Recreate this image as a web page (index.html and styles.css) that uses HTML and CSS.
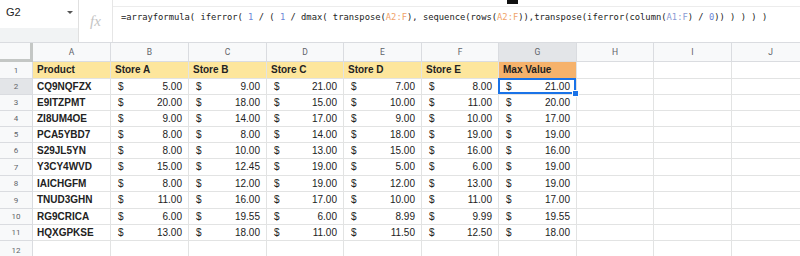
FILE: index.html
```html
<!DOCTYPE html>
<html lang="en">
<head>
    <meta charset="UTF-8">
    <title>Max Value - Sheet</title>
    <link rel="stylesheet" href="styles.css">
</head>
<body>
    <div class="fbar">
        <div class="namebox">
            <div class="nb-top"><span>G2</span><span class="caret"></span></div>
            <div class="nb-fill"></div>
        </div>
        <div class="fx">fx</div>
        <div class="formula">=arrayformula( iferror( <span class="num">1</span> / ( <span class="num">1</span> / dmax( transpose(<span class="r1">A2:F</span>), sequence(rows(<span class="r1">A2:F</span>)),transpose(iferror(column(<span class="r2">A1:F</span>) / <span class="num">0</span>)) ) ) ) )</div>
        <div class="cursor"></div>
    </div>

    <div class="sheet" id="sheet"></div>

    <script>
        var cols = ['A', 'B', 'C', 'D', 'E', 'F', 'G', 'H', 'I', 'J'];
        var heads = ['Product', 'Store A', 'Store B', 'Store C', 'Store D', 'Store E', 'Max Value'];
        var rows = [
            ['CQ9NQFZX', '5.00', '9.00', '21.00', '7.00', '8.00', '21.00'],
            ['E9ITZPMT', '20.00', '18.00', '15.00', '10.00', '11.00', '20.00'],
            ['ZI8UM4OE', '9.00', '14.00', '17.00', '9.00', '10.00', '17.00'],
            ['PCA5YBD7', '8.00', '8.00', '14.00', '18.00', '19.00', '19.00'],
            ['S29JL5YN', '8.00', '10.00', '13.00', '15.00', '16.00', '16.00'],
            ['Y3CY4WVD', '15.00', '12.45', '19.00', '5.00', '6.00', '19.00'],
            ['IAICHGFM', '8.00', '12.00', '19.00', '12.00', '13.00', '19.00'],
            ['TNUD3GHN', '11.00', '16.00', '17.00', '10.00', '11.00', '17.00'],
            ['RG9CRICA', '6.00', '19.55', '6.00', '8.99', '9.99', '19.55'],
            ['HQXGPKSE', '13.00', '18.00', '11.00', '11.50', '12.50', '18.00']
        ];

        var html = '<div class="corner"></div>';
        cols.forEach(function(c) {
            html += '<div class="colhead' + (c === 'G' ? ' active' : '') + '">' + c + '</div>';
        });

        // header row
        html += '<div class="rowhead">1</div>';
        cols.forEach(function(c, i) {
            if (i < 6) html += '<div class="cell head">' + heads[i] + '</div>';
            else if (i === 6) html += '<div class="cell head max">' + heads[i] + '</div>';
            else html += '<div class="cell"></div>';
        });

        rows.forEach(function(r, n) {
            html += '<div class="rowhead' + (n === 0 ? ' active' : '') + '">' + (n + 2) + '</div>';
            cols.forEach(function(c, i) {
                if (i === 0) html += '<div class="cell name">' + r[0] + '</div>';
                else if (i < 7) {
                    var sel = (n === 0 && i === 6) ? ' sel' : '';
                    html += '<div class="cell money' + sel + '"><span>$</span><span>' + r[i] + '</span></div>';
                }
                else html += '<div class="cell"></div>';
            });
        });

        html += '<div class="rowhead">12</div>';
        cols.forEach(function() { html += '<div class="cell last"></div>'; });

        document.getElementById('sheet').innerHTML = html;
    </script>
</body>
</html>
```

FILE: styles.css
```css
body {
    margin: 0;
    width: 800px;
    height: 256px;
    overflow: hidden;
    background: white;
    font-family: Arial, 'Liberation Sans', sans-serif;
    color: #222;
}
.fbar {
    position: relative;
    display: flex;
    height: 43px;
    box-sizing: border-box;
    border-bottom: 1px solid #dadce0;
}
.namebox {
    width: 78px;
    border-right: 1px solid #e0e0e0;
    display: flex;
    flex-direction: column;
}
.nb-top {
    height: 28px;
    display: flex;
    align-items: center;
    justify-content: space-between;
    padding: 0 5px 4px 6px;
    box-sizing: border-box;
    font-size: 11px;
    color: #222;
}
.caret {
    width: 0;
    height: 0;
    border-left: 3px solid transparent;
    border-right: 3px solid transparent;
    border-top: 3px solid #555;
}
.nb-fill {
    flex: 1;
    background: #f1f3f4;
}
.fx {
    width: 34px;
    border-right: 1px solid #e6e6e6;
    text-align: center;
    padding-top: 13px;
    box-sizing: border-box;
    font-family: 'Liberation Serif', serif;
    font-style: italic;
    font-size: 15px;
    color: #c4c4c4;
}
.formula {
    flex: 1;
    margin-top: 6px;
    border-top: 1px solid #ececec;
    padding: 5px 0 0 8px;
    font-family: 'DejaVu Sans Mono', monospace;
    font-size: 8.8px;
    color: #222;
    white-space: pre;
}
.num {
    color: #6b86d6;
}
.r1 {
    color: #f0a36b;
}
.r2 {
    color: #8b9bd3;
}
.cursor {
    position: absolute;
    left: 507px;
    top: 0;
    width: 11px;
    height: 4px;
    background: #111;
}

/* grid */
.sheet {
    display: grid;
    grid-template-columns: 33px 78px 78px 78px 77px 78px 77px 78px 77px 78px 78px;
    grid-template-rows: 19px 17px 16px 16px 16px 16px 16px 17px 16px 17px 16px 16px 20px;
}
.corner {
    background: #f8f9fa;
    border-right: 3px solid #c4c7c5;
    border-bottom: 3px solid #c4c7c5;
}
.colhead {
    background: #f8f9fa;
    border-right: 1px solid #dadce0;
    border-bottom: 1px solid #dadce0;
    display: flex;
    align-items: center;
    justify-content: center;
    font-family: Roboto, sans-serif;
    font-size: 8.5px;
    color: #5f6368;
}
.rowhead {
    background: #f8f9fa;
    border-right: 1px solid #dadce0;
    border-bottom: 1px solid #dadce0;
    display: flex;
    align-items: center;
    justify-content: center;
    font-family: Roboto, sans-serif;
    font-size: 8px;
    color: #5f6368;
}
.active {
    background: #e3e5e8;
}
.corner, .colhead, .rowhead, .cell {
    box-sizing: border-box;
}
.cell {
    border-right: 1px solid #e2e3e3;
    border-bottom: 1px solid #e2e3e3;
    font-size: 10px;
    line-height: 15px;
    padding: 0 4px;
    white-space: nowrap;
    overflow: hidden;
}
.head {
    background: #fde69c;
    font-weight: bold;
    line-height: 16px;
}
.max {
    background: #f6b26b;
}
.name {
    font-weight: bold;
}
.money {
    display: flex;
    justify-content: space-between;
    padding: 0 6px 0 7px;
}
.last {
    border-bottom: none;
}
.sel {
    position: relative;
    overflow: visible;
}
.sel::after {
    content: '';
    position: absolute;
    left: -1px;
    top: -1px;
    right: 0;
    bottom: 0;
    border: 2px solid #1a73e8;
}
.sel::before {
    content: '';
    position: absolute;
    right: -3px;
    bottom: -3px;
    width: 5px;
    height: 5px;
    background: #1a73e8;
    border: 1px solid white;
    z-index: 2;
}
```
